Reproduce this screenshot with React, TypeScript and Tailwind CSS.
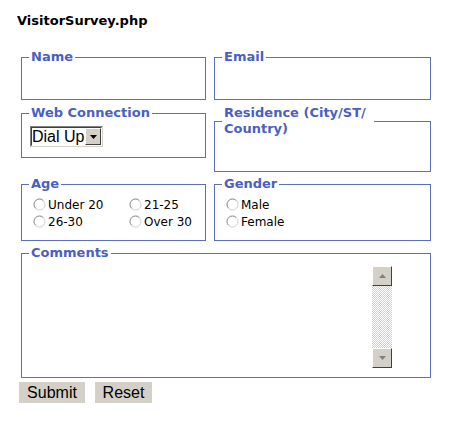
import React from "react";

function Radio({ label }: { label: string }) {
    return (
        <label className="flex items-center h-[17px] gap-[2px]">
            <svg width="13" height="13" viewBox="0 0 13 13" className="ml-[3px] shrink-0">
                <circle cx="6.5" cy="6.5" r="5.5" fill="#fff" />
                <path d="M2.6 10.4 A5.5 5.5 0 0 1 10.4 2.6" fill="none" stroke="#808080" strokeWidth="1" />
                <path d="M10.4 2.6 A5.5 5.5 0 0 1 2.6 10.4" fill="none" stroke="#d4d0c8" strokeWidth="1" />
            </svg>
            <span>{label}</span>
        </label>
    );
}

function Box({
    title,
    className,
    legendClass,
    children,
}: {
    title: string;
    className: string;
    legendClass?: string;
    children?: React.ReactNode;
}) {
    return (
        <fieldset className={`border border-[#5a6fbf] px-2 ${className}`}>
            <legend
                className={`px-[2px] -ml-[1px] text-[13px] leading-4 font-bold text-[#4a5fc1] ${legendClass ?? ""}`}
            >
                {title}
            </legend>
            {children}
        </fieldset>
    );
}

export default function App() {
    return (
        <div className="w-[476px] h-[422px] bg-white pl-[17px] pt-[13px] font-['DejaVu_Sans',sans-serif] text-black">
            <h1 className="text-[13px] leading-4 font-bold">VisitorSurvey.php</h1>

            <div className="ml-[4px] mt-[20px] w-[410px] flex flex-col">
                <div className="flex gap-[8px] items-start">
                    <Box title="Name" className="w-[185px] h-[51px]" />
                    <Box title="Email" className="w-[217px] h-[51px]" />
                </div>

                <div className="flex gap-[8px] items-start mt-[5px]">
                    <Box title="Web Connection" className="w-[185px] h-[53px]">
                        <div className="mt-[5px] w-[73px] h-[21px] flex border border-t-[#808080] border-l-[#808080] border-r-[#d4d0c8] border-b-[#d4d0c8]">
                            <div className="flex-1 border border-t-[#404040] border-l-[#404040] border-r-white border-b-white bg-white flex overflow-hidden">
                                <span className="flex-1 whitespace-nowrap font-['Liberation_Sans',Arial,sans-serif] text-[16px] leading-[17px]">
                                    Dial Up
                                </span>
                                <span className="w-[16px] shrink-0 bg-[#d4d0c8] border border-t-white border-l-white border-r-[#404040] border-b-[#404040] flex items-center justify-center">
                                    <svg width="7" height="4" viewBox="0 0 7 4">
                                        <path d="M0 0H7L3.5 4Z" fill="#000" />
                                    </svg>
                                </span>
                            </div>
                        </div>
                    </Box>
                    <Box
                        title="Residence (City/ST/ Country)"
                        className="w-[217px] h-[67px]"
                        legendClass="w-[152px] leading-[16px]"
                    />
                </div>

                <div className="flex gap-[8px] items-start mt-[4px]">
                    <Box title="Age" className="w-[185px] h-[65px]">
                        <div className="pt-[4px] grid grid-cols-[96px_1fr] text-[12px]">
                            <Radio label="Under 20" />
                            <Radio label="21-25" />
                            <Radio label="26-30" />
                            <Radio label="Over 30" />
                        </div>
                    </Box>
                    <Box title="Gender" className="w-[217px] h-[65px]">
                        <div className="pt-[4px] flex flex-col text-[12px]">
                            <Radio label="Male" />
                            <Radio label="Female" />
                        </div>
                    </Box>
                </div>

                <Box title="Comments" className="w-[410px] h-[133px] mt-[4px]">
                    <div className="mt-[5px] w-[362px] h-[102px] flex justify-end">
                        <div className="w-[20px] h-full flex flex-col">
                            <div className="h-[20px] bg-[#d4d0c8] border border-t-white border-l-white border-r-[#404040] border-b-[#404040] flex items-center justify-center">
                                <svg width="7" height="4" viewBox="0 0 7 4">
                                    <path d="M0 4H7L3.5 0Z" fill="#808080" />
                                </svg>
                            </div>
                            <div className="flex-1 bg-[repeating-conic-gradient(#d4d0c8_0_25%,#ffffff_0_50%)] bg-[length:2px_2px]" />
                            <div className="h-[20px] bg-[#d4d0c8] border border-t-white border-l-white border-r-[#404040] border-b-[#404040] flex items-center justify-center">
                                <svg width="7" height="4" viewBox="0 0 7 4">
                                    <path d="M0 0H7L3.5 4Z" fill="#808080" />
                                </svg>
                            </div>
                        </div>
                    </div>
                </Box>

                <div className="flex gap-[10px] mt-[4px] -ml-[2px] font-['Liberation_Sans',Arial,sans-serif] text-[16px]">
                    <button className="h-[21px] w-[66px] bg-[#d4d0c8] leading-[21px]">Submit</button>
                    <button className="h-[21px] w-[57px] bg-[#d4d0c8] leading-[21px]">Reset</button>
                </div>
            </div>
        </div>
    );
}
